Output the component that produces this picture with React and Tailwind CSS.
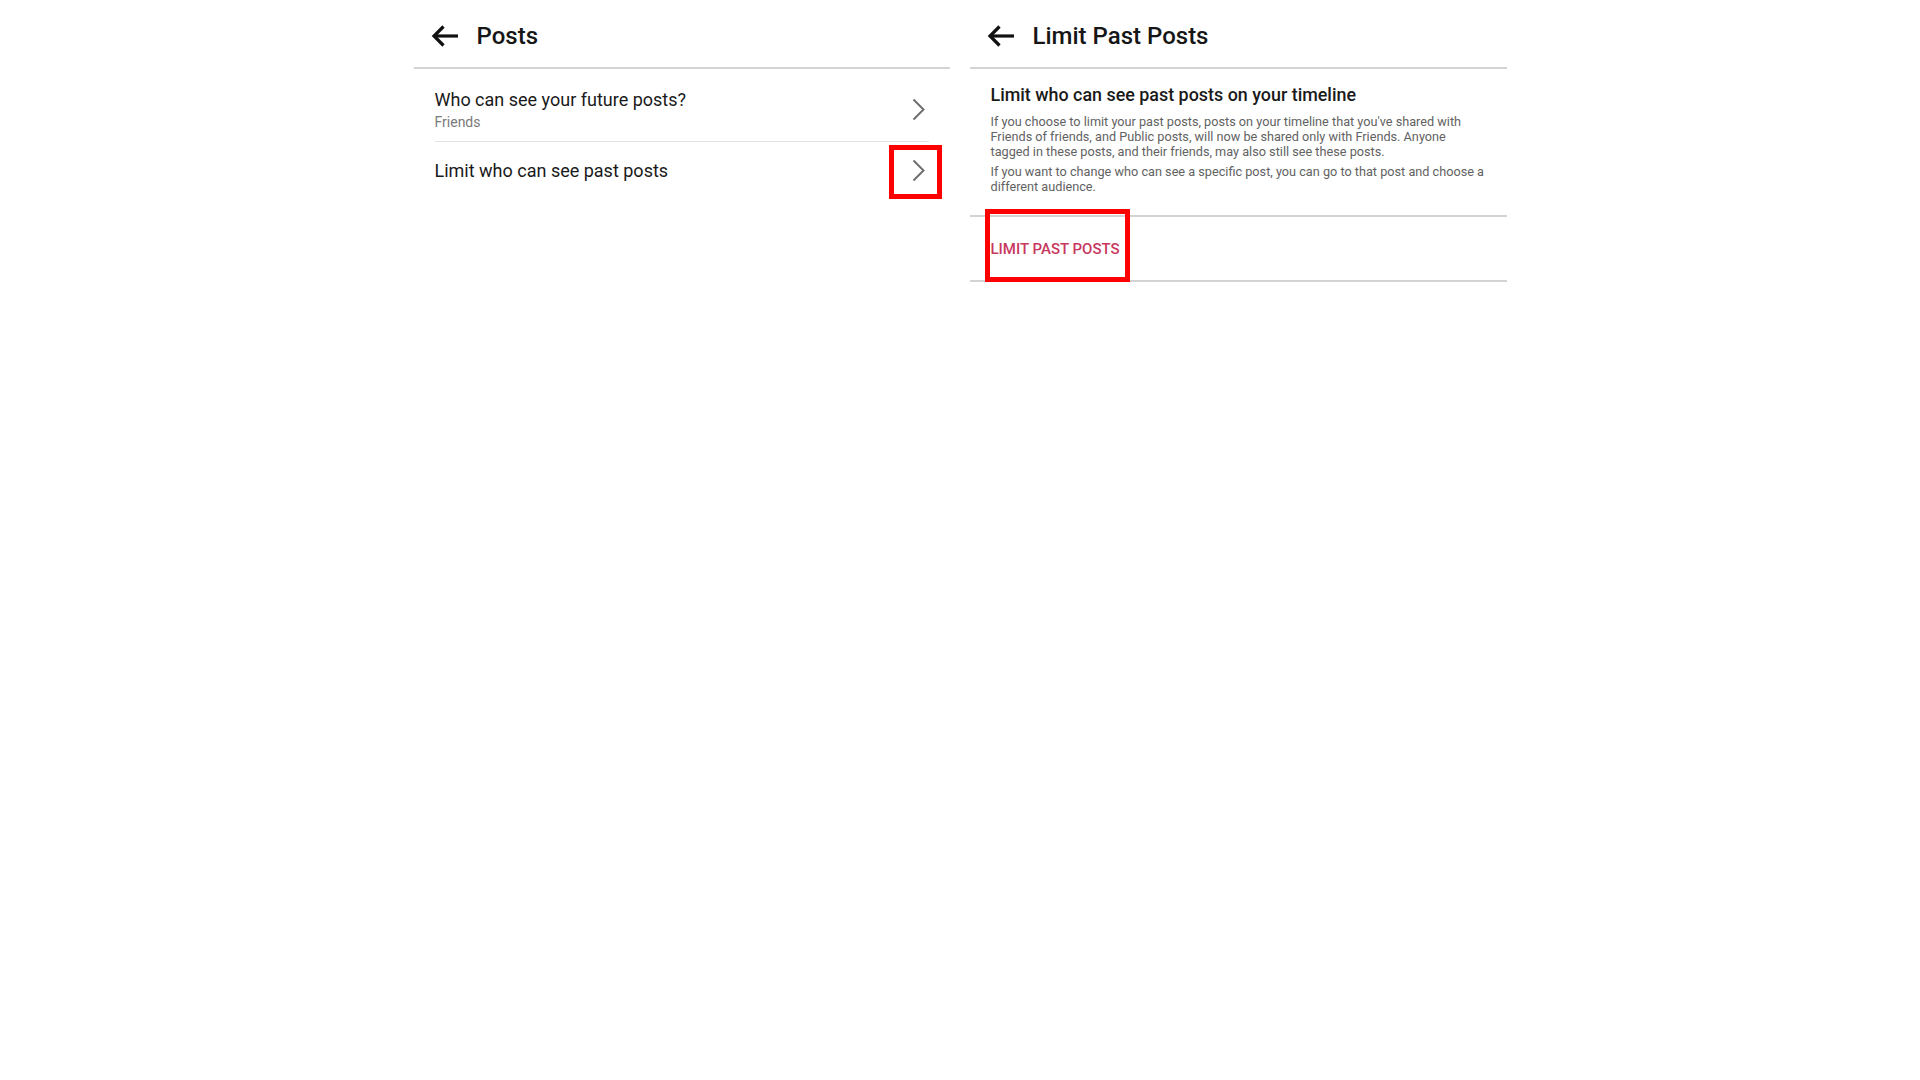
import React from "react";

function BackArrow() {
  return (
    <svg width="28" height="22" viewBox="0 0 28 22" fill="none">
      <path d="M3 11H27" stroke="#111" strokeWidth="3.2" />
      <path d="M12.5 1.5L3 11l9.5 9.5" stroke="#111" strokeWidth="3.2" strokeLinejoin="miter" />
    </svg>
  );
}

function Chevron() {
  return (
    <svg width="13" height="23" viewBox="0 0 13 23" fill="none">
      <path d="M1.5 1.5L11.5 11.5L1.5 21.5" stroke="#6f6f6f" strokeWidth="2" />
    </svg>
  );
}

function Header({ title }) {
  return (
    <div className="h-[69px] flex items-center border-b-2 border-[#d3d3d3]">
      <div className="pl-[17px] w-[63px] flex items-center mt-[4px]">
        <BackArrow />
      </div>
      <div className="text-[24px] leading-[28px] font-medium text-[#161616] mt-[4px]">{title}</div>
    </div>
  );
}

export default function App() {
  return (
    <div
      className="w-[1920px] h-[1080px] bg-white flex justify-center gap-[20px]"
      style={{ fontFamily: "Roboto, 'Liberation Sans', sans-serif" }}
    >
      {/* Left panel */}
      <div className="w-[536px]">
        <Header title="Posts" />
        <div className="mx-[21px]">
          <div className="flex items-start justify-between pt-[20px] pb-[10px] border-b-[1.5px] border-[#e3e3e3]">
            <div>
              <div className="text-[18px] leading-[21px] text-[#1a1a1a]">Who can see your future posts?</div>
              <div className="text-[14px] leading-[18px] text-[#7a7a7a] mt-[3px]">Friends</div>
            </div>
            <div className="mt-[9px] mr-[4px]">
              <Chevron />
            </div>
          </div>
          <div className="h-[56px] flex items-center justify-between">
            <div className="text-[18px] leading-[21px] text-[#1a1a1a] mt-[1px]">Limit who can see past posts</div>
            <div className="relative mr-[4px] flex items-center">
              <Chevron />
              <div className="absolute left-[-23px] top-[-14px] w-[53px] h-[54px] border-[5px] border-[#ff0000]" />
            </div>
          </div>
        </div>
      </div>

      {/* Right panel */}
      <div className="w-[537px]">
        <Header title="Limit Past Posts" />
        <div className="pl-[21px] pr-[16px] pt-[15px] pb-[21px] border-b-2 border-[#d3d3d3]">
          <div className="text-[17.9px] leading-[22px] text-[#1a1a1a] font-medium mb-[8px]">
            Limit who can see past posts on your timeline
          </div>
          <p className="text-[12.7px] leading-[15px] text-[#626262] whitespace-nowrap">
            If you choose to limit your past posts, posts on your timeline that you've shared with
            <br />
            Friends of friends, and Public posts, will now be shared only with Friends. Anyone
            <br />
            tagged in these posts, and their friends, may also still see these posts.
          </p>
          <p className="text-[12.7px] leading-[15px] text-[#626262] whitespace-nowrap mt-[5px]">
            If you want to change who can see a specific post, you can go to that post and choose a
            <br />
            different audience.
          </p>
        </div>
        <div className="h-[65px] flex items-center border-b-2 border-[#d3d3d3] pl-[21px]">
          <div className="relative">
            <span className="block text-[15px] leading-[18px] font-medium text-[#c8385e]">LIMIT PAST POSTS</span>
            <div className="absolute left-[-6px] top-[-31px] w-[145px] h-[73px] border-[5px] border-[#ff0000]" />
          </div>
        </div>
      </div>
    </div>
  );
}
